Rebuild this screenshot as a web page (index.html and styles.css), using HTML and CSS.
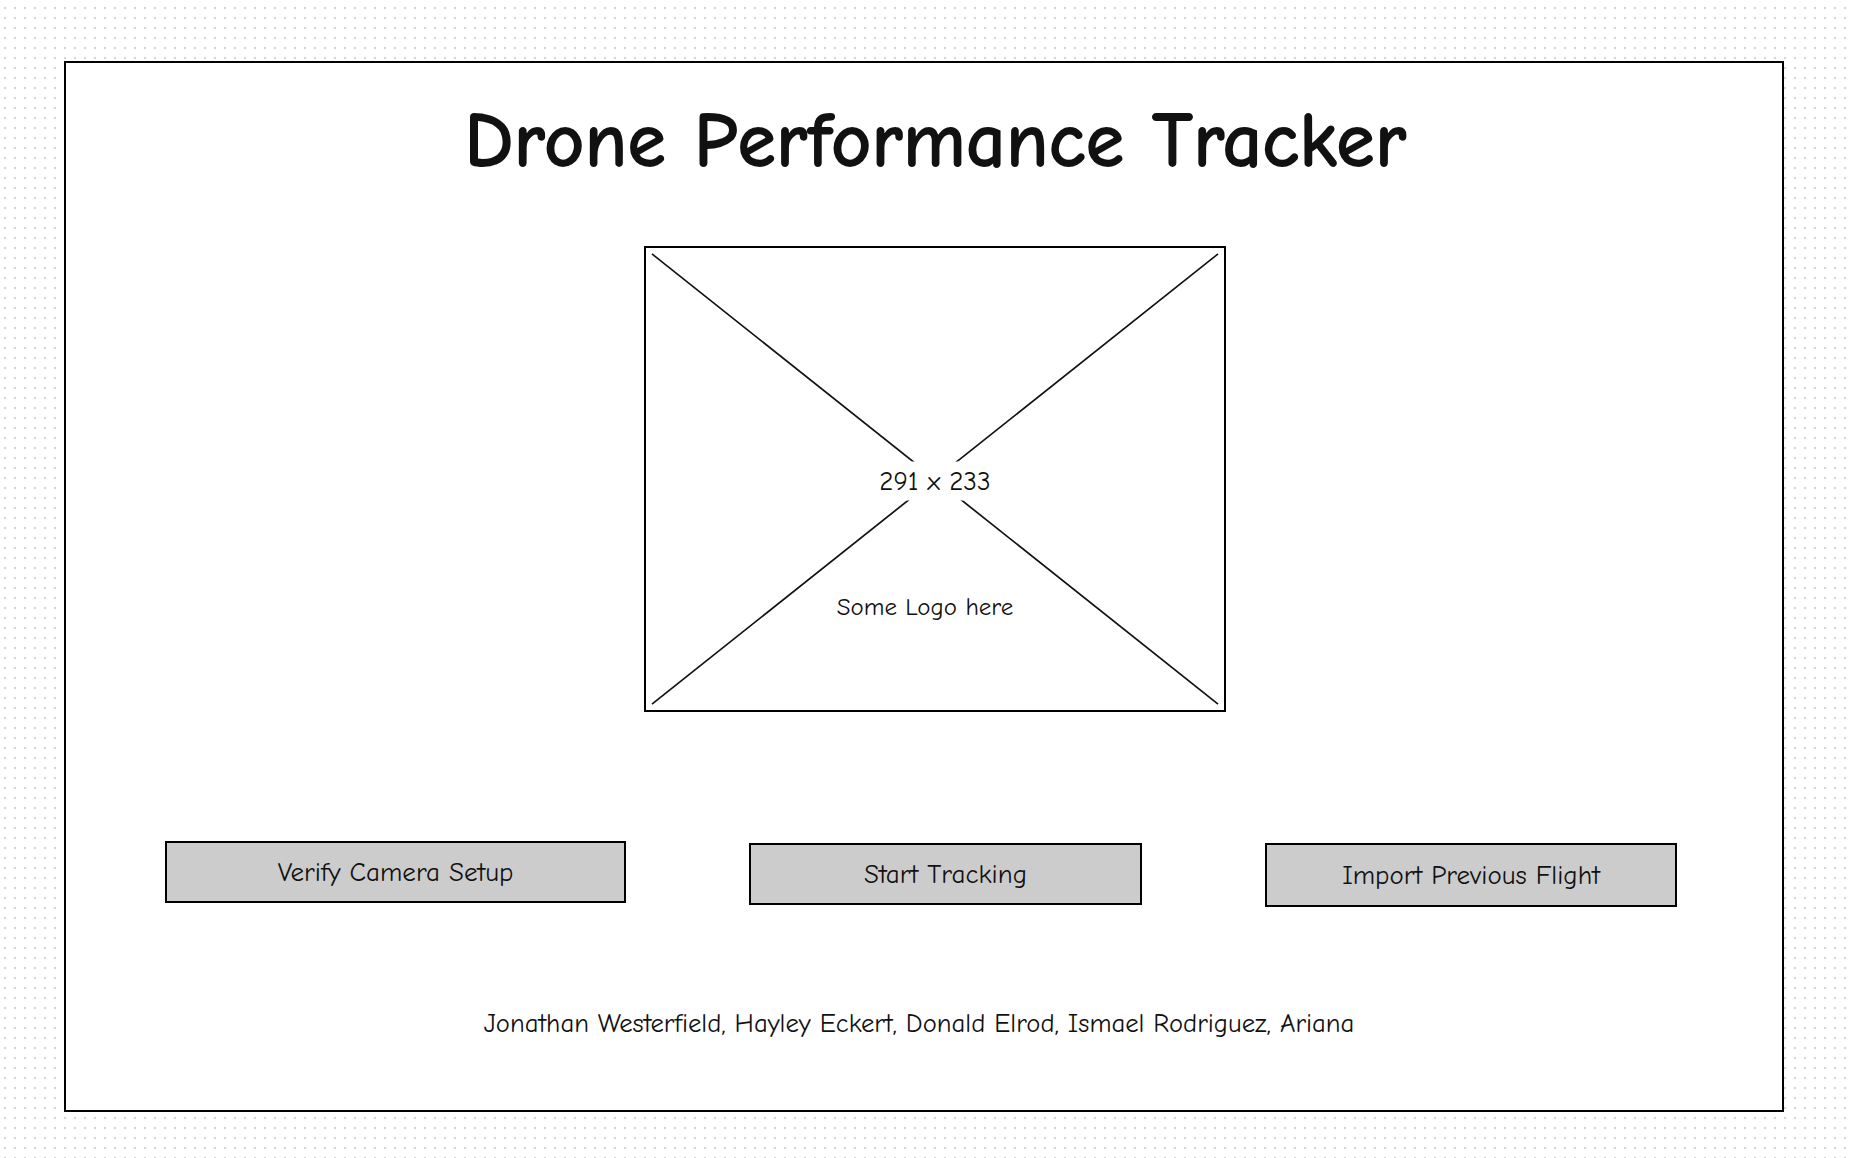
FILE: index.html
```html
<!DOCTYPE html>
<html lang="en">
<head>
    <meta charset="UTF-8">
    <meta name="viewport" content="width=device-width, initial-scale=1.0">
    <title>Drone Performance Tracker</title>
    <link rel="stylesheet" href="styles.css">
</head>
<body>
    <div class="frame">
        <div class="head">
            <h1 class="title">Drone Performance Tracker</h1>

            <!-- logo placeholder, 291 x 233 drawn at 2x -->
            <div class="placeholder">
                <svg class="cross" viewBox="0 0 582 466" preserveAspectRatio="none">
                    <line x1="6" y1="6" x2="576" y2="460" />
                    <line x1="576" y1="6" x2="6" y2="460" />
                </svg>
                <span class="size-label">291 x 233</span>
                <span class="logo-label">Some Logo here</span>
            </div>
        </div>

        <div class="actions">
            <button class="btn btn-verify">Verify Camera Setup</button>
            <button class="btn btn-start">Start Tracking</button>
            <button class="btn btn-import">Import Previous Flight</button>
        </div>

        <p class="credits">Jonathan Westerfield, Hayley Eckert, Donald Elrod, Ismael Rodriguez, Ariana</p>
    </div>
</body>
</html>
```

FILE: styles.css
```css
:root {
    --ink: #111;
    --button-bg: #cccccc;
    --dot: #d4d4d4;
}

body {
    margin: 0;
    min-height: 100vh;
    font-family: "Comic Sans MS", "Comic Neue", "Open Sans", sans-serif;
    color: var(--ink);
    background-color: #fff;
    background-image: radial-gradient(circle, var(--dot) 1px, transparent 1.6px);
    background-size: 10px 10px;
    background-position: 0 3px;
    overflow: hidden;
}

.frame {
    box-sizing: border-box;
    width: 1720px;
    height: 1051px;
    margin: 61px 0 0 64px;
    border: 2px solid #000;
    background: #fff;
    display: flex;
    flex-direction: column;
    align-items: center;
}

.head {
    align-self: stretch;
    padding-left: 22px;
    display: flex;
    flex-direction: column;
    align-items: center;
}

.title {
    margin: 30px 0 0;
    font-size: 80px;
    font-weight: 700;
    line-height: 1.2;
    letter-spacing: -0.7px;
}

.placeholder {
    position: relative;
    box-sizing: border-box;
    width: 582px;
    height: 466px;
    margin-top: 57px;
    border: 2px solid #000;
}

.cross {
    display: block;
    width: 100%;
    height: 100%;
}

.cross line {
    stroke: #111;
    stroke-width: 1.7;
    vector-effect: non-scaling-stroke;
}

.size-label,
.logo-label {
    position: absolute;
    left: 50%;
    transform: translate(-50%, -50%);
    background: #fff;
    white-space: nowrap;
    line-height: 1;
}

.size-label {
    top: 233px;
    padding: 6px 6px;
    font-size: 27px;
}

.logo-label {
    top: 358px;
    margin-left: -10px;
    background: transparent;
    font-size: 25px;
}

.actions {
    align-self: flex-start;
    margin: 129px 0 0 99px;
    display: flex;
    align-items: flex-start;
    gap: 123px;
}

.btn {
    box-sizing: border-box;
    height: 62px;
    border: 2px solid #000;
    background: var(--button-bg);
    font-family: inherit;
    font-size: 27px;
    color: var(--ink);
    cursor: pointer;
}

.btn-verify {
    width: 461px;
}

.btn-start {
    width: 393px;
    margin-top: 2px;
}

.btn-import {
    width: 412px;
    height: 64px;
    margin-top: 2px;
}

.credits {
    margin: 101px 0 0;
    padding-right: 10px;
    font-size: 26.7px;
}
```
